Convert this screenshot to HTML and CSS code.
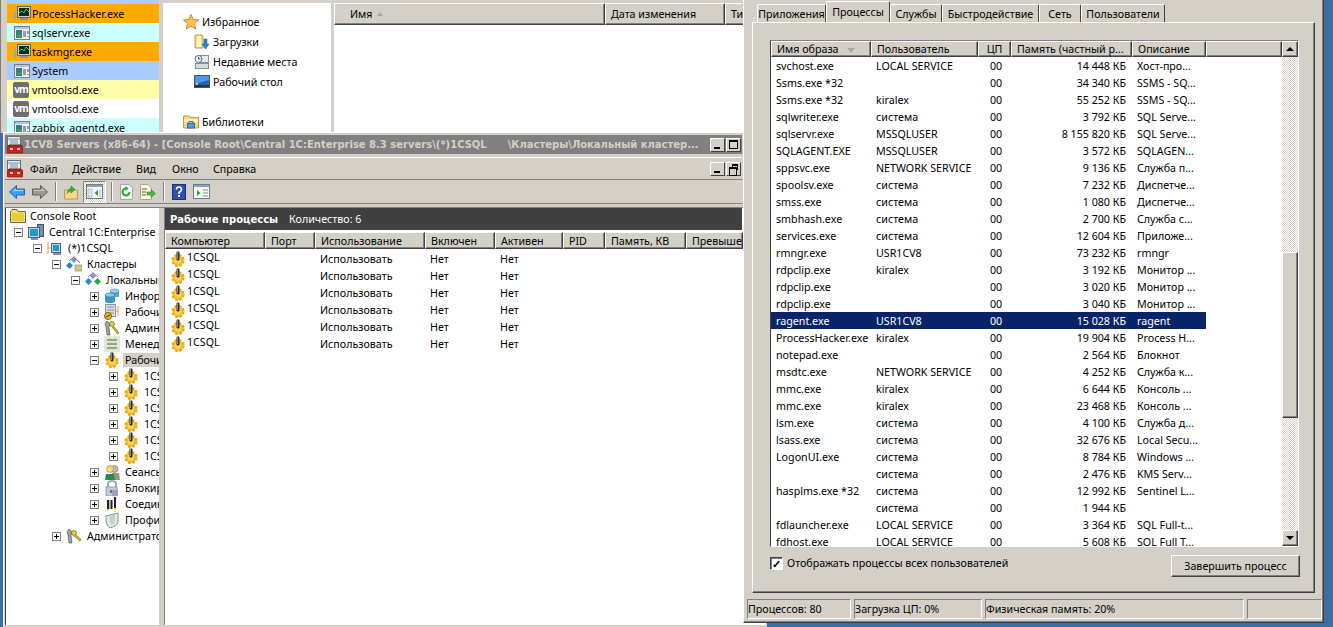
FILE: index.html
```html
<!DOCTYPE html>
<html>
<head>
    <meta charset="UTF-8">
    <title>1CV8 Servers</title>
    <link rel="stylesheet" href="styles.css">
</head>
<body>
<svg class="sprites" width="0" height="0">
    <symbol id="i-app" viewBox="0 0 16 16">
        <rect x="0.500" y="1.500" width="15" height="13" fill="#eef2f6" stroke="#75818c"/>
        <rect x="1" y="2" width="14" height="2" fill="#b9c6d2"/>
        <rect x="2" y="5" width="6" height="8" fill="#2f7f8c"/>
        <rect x="3" y="9" width="4" height="3" fill="#4f9a3c"/>
        <path d="M9 7h3M9 9h3M9 11h3M14 6v3M14 11v1" stroke="#3c4650"/>
    </symbol>
    <symbol id="i-hacker" viewBox="0 0 18 16">
        <rect x="4.500" y="0.500" width="13" height="11" fill="#c8d0d8" stroke="#5c6670"/>
        <rect x="6" y="2" width="10" height="8" fill="#10281c"/>
        <path d="M6 7l3-2 2 2 2-4 3 3" fill="none" stroke="#39d353"/>
        <rect x="7" y="12" width="8" height="2" fill="#8c969e"/>
        <path d="M1 5h2v9H1z" fill="#9aa6ae"/>
        <path d="M0 8h4" stroke="#e0a030"/>
    </symbol>
    <symbol id="i-star" viewBox="0 0 16 16">
        <path d="M8 0.500l2.200 5 5.300.5-4 3.600 1.200 5.400L8 12.200 3.300 15l1.200-5.400-4-3.600 5.300-.5z" fill="#fbc24c" stroke="#d8873c"/>
    </symbol>
    <symbol id="i-downloads" viewBox="0 0 16 16">
        <path d="M1 1h7l1 2v11H1z" fill="#f3dc8e" stroke="#b99a4c"/>
        <path d="M3 2h4v11H3z" fill="#fff3c0"/>
        <path d="M10 5h3v5h2l-3.500 5L8 10h2z" fill="#2b7fd0" stroke="#175a9c" stroke-width="0.500"/>
    </symbol>
    <symbol id="i-recent" viewBox="0 0 16 16">
        <rect x="1.500" y="9.500" width="13" height="5" fill="#d7dcdf" stroke="#87919a"/>
        <rect x="5.500" y="1.500" width="9" height="7" fill="#e8edf0" stroke="#87919a"/>
        <circle cx="4.500" cy="5" r="3.500" fill="#f4f6f8" stroke="#5d6a75"/>
        <path d="M4.500 3v2h2" fill="none" stroke="#39505f"/>
    </symbol>
    <symbol id="i-desktop" viewBox="0 0 16 16">
        <rect x="0.500" y="1.500" width="15" height="12" fill="#1f5fc0" stroke="#40525f"/>
        <path d="M1 2h14v4L1 10z" fill="#4f97e8"/>
        <rect x="1" y="11" width="14" height="2" fill="#2c3440"/>
        <rect x="2" y="9" width="2" height="2" fill="#e8c050"/>
    </symbol>
    <symbol id="i-library" viewBox="0 0 16 16">
        <path d="M0.500 3V2h6l1 1.500h8V14H.5z" fill="#f3d680" stroke="#c09a48"/>
        <path d="M1 5h14v3H1z" fill="#fff0b8"/>
        <rect x="4.500" y="9.500" width="7" height="4.500" fill="#4a9ade" stroke="#2c6ea8"/>
        <path d="M6 9.500v-2h4v2" fill="none" stroke="#2c6ea8"/>
    </symbol>
    <symbol id="i-mmc" viewBox="0 0 16 18">
        <rect x="0.500" y="0.500" width="13" height="9" fill="#e8ecf0" stroke="#667380"/>
        <path d="M1 3h12M3 5h8M3 7h8" stroke="#7890a8"/>
        <path d="M2 11V9h12v2" fill="none" stroke="#6a1010"/>
        <rect x="0" y="10" width="16" height="7" rx="1" fill="#c8231f" stroke="#7c1010" stroke-width="0.600"/>
        <rect x="3" y="12" width="3" height="2" fill="#f0d0a0"/>
        <rect x="10" y="12" width="3" height="2" fill="#f0d0a0"/>
    </symbol>
    <symbol id="i-back" viewBox="0 0 16 14">
        <path d="M0.500 7L7.500 0.500V4H15.500V10H7.500V13.500z" fill="#3aa0ee" stroke="#1e66b8"/>
        <path d="M3 7l4-3.500V5h7v1H6z" fill="#a8dcfa"/>
    </symbol>
    <symbol id="i-forward" viewBox="0 0 16 14">
        <path d="M15.500 7L8.500 0.500V4H0.500V10H8.500V13.500z" fill="#9a9a96" stroke="#5c5c58"/>
        <path d="M2 5h8V3l3 3H2z" fill="#c8c8c4"/>
    </symbol>
    <symbol id="i-up" viewBox="0 0 14 15">
        <path d="M0.500 5.500H13.500V14.500H0.500z" fill="#f6d98c" stroke="#b99a52"/>
        <path d="M3 9Q4 4 7 4V1.500L11 5 7 8.500V6Q5 6 3 9z" fill="#3fae3c" stroke="#1e7a22" stroke-width="0.600"/>
    </symbol>
    <symbol id="i-tree" viewBox="0 0 17 15">
        <rect x="0.500" y="0.500" width="16" height="14" fill="#f4f6f8" stroke="#6f7d8a"/>
        <rect x="1" y="1" width="15" height="2" fill="#8ea2b4"/>
        <rect x="2" y="5" width="4" height="8" fill="#dfe5ea" stroke="#8899a8" stroke-width="0.500"/>
        <path d="M12 6v6L8.500 9z" fill="#2e9e3a"/>
        <path d="M14 6v7" stroke="#aab6c0"/>
    </symbol>
    <symbol id="i-refresh" viewBox="0 0 13 16">
        <path d="M0.500 0.500H9L12.500 4V15.500H0.500z" fill="#f4f6f8" stroke="#a0a8ae"/>
        <path d="M9.500 8A3.500 3.500 0 1 1 6.500 4.500" fill="none" stroke="#2ea838" stroke-width="2"/>
        <path d="M5.500 2l3 2.500-3 2.500z" fill="#2ea838"/>
    </symbol>
    <symbol id="i-export" viewBox="0 0 16 16">
        <path d="M0.500 0.500H8L11.500 4V15.500H0.500z" fill="#fff8dc" stroke="#aaa68e"/>
        <path d="M2 5h5M2 8h4M2 11h4" stroke="#555"/>
        <path d="M7 8h4V5.500L15.500 9.500 11 13.500V11H7z" fill="#4cb840" stroke="#2c8a2c" stroke-width="0.600"/>
    </symbol>
    <symbol id="i-help" viewBox="0 0 14 16">
        <rect x="0.500" y="0.500" width="13" height="15" fill="#2e50b0" stroke="#1c2f78"/>
        <path d="M4.500 5.500Q4.500 3 7 3t2.500 2.500Q9.500 7 7 8.500V10" fill="none" stroke="#fff" stroke-width="1.600"/>
        <rect x="6" y="11" width="2" height="2" fill="#fff"/>
    </symbol>
    <symbol id="i-action" viewBox="0 0 17 15">
        <rect x="0.500" y="0.500" width="16" height="14" fill="#f4f6f8" stroke="#6f7d8a"/>
        <rect x="1" y="1" width="15" height="2" fill="#8ea2b4"/>
        <path d="M4 6v6l3.500-3z" fill="#2e9e3a"/>
        <path d="M10 6h5M10 9h5M10 12h5" stroke="#7890a8"/>
    </symbol>
    <symbol id="i-root" viewBox="0 0 16 14">
        <path d="M0.500 2.500L2 .5h5l1 2h7.500v11H.5z" fill="#f5e06a" stroke="#6a6a50"/>
        <path d="M2 4h12v8H2z" fill="#e8cc40"/>
    </symbol>
    <symbol id="i-computer" viewBox="0 0 16 16">
        <rect x="9.500" y="0.500" width="6" height="12" fill="#7a8ea8" stroke="#465468"/>
        <rect x="0.500" y="3.500" width="11" height="10" fill="#c8d4e0" stroke="#506070"/>
        <rect x="2" y="5" width="8" height="7" fill="#1c9ccc"/>
        <rect x="3" y="14" width="7" height="2" fill="#8494a8"/>
    </symbol>
    <symbol id="i-server" viewBox="0 0 16 16">
        <path d="M1 2v12M1 8h3" stroke="#e0a030"/>
        <rect x="4.500" y="3.500" width="9" height="9" fill="#c8d4e0" stroke="#506070"/>
        <rect x="6" y="5" width="6" height="6" fill="#1c9ccc"/>
        <rect x="6" y="13" width="8" height="2" fill="#8494a8"/>
    </symbol>
    <symbol id="i-clusters" viewBox="0 0 16 16">
        <path d="M8 0l3.500 3.500L8 7 4.500 3.500z" fill="#8494c0"/>
        <path d="M3.500 6L7 9.500 3.500 13 0 9.500z" fill="#2c84d0"/>
        <rect x="9" y="9" width="7" height="6" fill="#cfc890" stroke="#8a8450" stroke-width="0.600"/>
        <path d="M3 5l2-2M11 4l3 3" stroke="#5a8ad0"/>
    </symbol>
    <symbol id="i-cluster" viewBox="0 0 16 16">
        <path d="M8 0l3.500 3.500L8 7 4.500 3.500z" fill="#8494c0"/>
        <path d="M3.500 6L7 9.500 3.500 13 0 9.500z" fill="#2c84d0"/>
        <path d="M12.500 6L16 9.500 12.500 13 9 9.500z" fill="#2ca84c"/>
        <path d="M3 5l2-2M13 5l-2-2" stroke="#5a8ad0"/>
    </symbol>
    <symbol id="i-db" viewBox="0 0 16 16">
        <path d="M6 3v6h9V3z" fill="#5aa0d8"/>
        <ellipse cx="10.500" cy="3" rx="4.500" ry="2" fill="#9ed0ee" stroke="#3c7eb0" stroke-width="0.600"/>
        <path d="M1 7v6q0 2 5 2t5-2V7z" fill="#3c94c8"/>
        <ellipse cx="6" cy="7" rx="5" ry="2" fill="#8cc8e8" stroke="#2c7098" stroke-width="0.600"/>
    </symbol>
    <symbol id="i-worker" viewBox="0 0 16 16">
        <rect x="1.500" y="0.500" width="10" height="12" fill="#d8dce0" stroke="#8c949c"/>
        <path d="M3 3h7M3 6h7M3 9h7" stroke="#8c949c"/>
        <path d="M14 2v10M12 7h2" stroke="#e0a030"/>
        <circle cx="4" cy="12" r="3.500" fill="#f0b820" stroke="#7c5c10"/>
        <path d="M2 13l4-2" stroke="#402c00"/>
    </symbol>
    <symbol id="i-keys" viewBox="0 0 16 16">
        <path d="M3 1l3 3-1 3 1 8H3L2 7 1 4z" fill="#98a4a8" stroke="#404c50" stroke-width="0.600"/>
        <circle cx="8" cy="4" r="2.500" fill="#e0d040" stroke="#505010" stroke-width="0.600"/>
        <path d="M9.500 6l5.500 7-1.500 1L8 7" fill="#d8c830" stroke="#505010" stroke-width="0.600"/>
    </symbol>
    <symbol id="i-manager" viewBox="0 0 16 16">
        <rect x="0" y="0" width="16" height="16" fill="#dcebd8"/>
        <path d="M3 4h10M3 8h10M3 12h10" stroke="#555" stroke-width="1.200"/>
        <path d="M6 2v12M11 2v12" stroke="#e0b030" stroke-dasharray="2 2"/>
    </symbol>
    <symbol id="i-gear" viewBox="0 0 16 16">
        <circle cx="8" cy="9.500" r="5.200" fill="#f4bc22"/>
        <circle cx="8" cy="9.500" r="5.600" fill="none" stroke="#e8a818" stroke-width="2" stroke-dasharray="2.800 1.600"/>
        <circle cx="8" cy="9.500" r="3.200" fill="#fad860"/>
        <rect x="6.500" y="0.500" width="3" height="9" rx="1" fill="#2c2c2c"/>
        <rect x="7" y="1" width="1" height="7" fill="#8c8c8c"/>
    </symbol>
    <symbol id="i-user" viewBox="0 0 16 16">
        <circle cx="10.500" cy="5" r="3.500" fill="#c0b8a8" stroke="#70685c" stroke-width="0.600"/>
        <path d="M8 9h7l1 7H8z" fill="#9c9484"/>
        <circle cx="6" cy="5" r="3.500" fill="#f4d890" stroke="#a08030" stroke-width="0.600"/>
        <path d="M2.500 4Q6 -1 9.500 3z" fill="#e8c830"/>
        <path d="M1 16l1-6h8l1 6z" fill="#2c8a4c"/>
    </symbol>
    <symbol id="i-lock" viewBox="0 0 16 16">
        <path d="M4 8V4q0-3 4-3t4 3v4" fill="none" stroke="#a8b0b8" stroke-width="2"/>
        <rect x="2" y="7" width="11" height="9" fill="#c4ccd0" stroke="#98a0a8"/>
        <rect x="8" y="10" width="6" height="6" fill="#9ca0cc"/>
        <path d="M7 10v3" stroke="#555" stroke-width="1.500"/>
    </symbol>
    <symbol id="i-cables" viewBox="0 0 16 16">
        <path d="M4 4v9M7.500 4v9M11 1v11" stroke="#222" stroke-width="2"/>
        <path d="M5.500 4v9" stroke="#bbb"/>
        <path d="M4 13v3M11 12v4" stroke="#e8e020" stroke-width="2" stroke-dasharray="2 1"/>
    </symbol>
    <symbol id="i-shield" viewBox="0 0 16 16">
        <path d="M2 4L14 1v8q0 5-8 7Q2 13 2 9z" fill="#e4e8e4" stroke="#8c948c"/>
        <path d="M5 5l6-2v6q0 3-4 4z" fill="#c4d4c4"/>
    </symbol>
    <symbol id="i-admin" viewBox="0 0 16 16">
        <path d="M3 1l3 3-1 3 1 8H3L2 7 1 4z" fill="#98a4a8" stroke="#404c50" stroke-width="0.600"/>
        <circle cx="8" cy="5" r="2.500" fill="#e8d030" stroke="#505010" stroke-width="0.600"/>
        <path d="M9.500 6.500l5.500 5-1 1.500L8 8" fill="#d8c020" stroke="#505010" stroke-width="0.600"/>
    </symbol>
</svg>

<div class="desktop">

    <!-- список процессов слева сверху -->
    <div class="window hacker-win">
        <div class="ph-list">
            <div class="ph-row ph-orange"><svg class="ph-icon"><use href="#i-hacker"/></svg>ProcessHacker.exe</div>
            <div class="ph-row ph-cyan"><svg class="ph-icon"><use href="#i-app"/></svg>sqlservr.exe</div>
            <div class="ph-row ph-orange"><svg class="ph-icon"><use href="#i-hacker"/></svg>taskmgr.exe</div>
            <div class="ph-row ph-blue"><svg class="ph-icon"><use href="#i-app"/></svg>System</div>
            <div class="ph-row ph-yellow"><span class="vm-icon">vm</span>vmtoolsd.exe</div>
            <div class="ph-row ph-white"><span class="vm-icon">vm</span>vmtoolsd.exe</div>
            <div class="ph-row ph-cyan"><svg class="ph-icon"><use href="#i-app"/></svg>zabbix_agentd.exe</div>
        </div>
    </div>

    <!-- проводник -->
    <div class="window explorer-win">
        <div class="nav-pane">
            <div class="nav-item nav-top nav-first"><svg class="nav-icon"><use href="#i-star"/></svg>Избранное</div>
            <div class="nav-item nav-sub"><svg class="nav-icon"><use href="#i-downloads"/></svg>Загрузки</div>
            <div class="nav-item nav-sub"><svg class="nav-icon"><use href="#i-recent"/></svg>Недавние места</div>
            <div class="nav-item nav-sub"><svg class="nav-icon"><use href="#i-desktop"/></svg>Рабочий стол</div>
            <div class="nav-item nav-top nav-lib"><svg class="nav-icon"><use href="#i-library"/></svg>Библиотеки</div>
        </div>
        <div class="file-pane">
            <div class="file-header">
                <div class="file-col col-name">Имя <span class="sort-up"></span></div>
                <div class="file-col col-date">Дата изменения</div>
                <div class="file-col col-type">Тип</div>
            </div>
        </div>
    </div>

    <!-- консоль 1С -->
    <div class="window mmc-win">
        <div class="mmc-title">
            <svg class="mmc-title-icon"><use href="#i-mmc"/></svg>
            <span class="mmc-title-text">1CV8 Servers (x86-64) - [Console Root\Central 1C:Enterprise 8.3 servers\(*)1CSQL &nbsp; &nbsp; &nbsp;\Кластеры\Локальный кластер...</span>
            <div class="caption-btns">
                <span class="caption-btn"><i class="glyph-min"></i></span>
                <span class="caption-btn"><i class="glyph-max"></i></span>
            </div>
        </div>
        <div class="mmc-menu">
            <svg class="mmc-menu-icon"><use href="#i-mmc"/></svg>
            <span class="menu-item m-file">Файл</span>
            <span class="menu-item m-action">Действие</span>
            <span class="menu-item m-view">Вид</span>
            <span class="menu-item m-window">Окно</span>
            <span class="menu-item">Справка</span>
            <div class="caption-btns mdi-btns">
                <span class="caption-btn"><i class="glyph-min"></i></span>
                <span class="caption-btn"><i class="glyph-restore"></i></span>
            </div>
        </div>
        <div class="mmc-toolbar">
            <svg class="tb-icon tb-back"><use href="#i-back"/></svg>
            <svg class="tb-icon tb-forward"><use href="#i-forward"/></svg>
            <span class="tb-sep"></span>
            <svg class="tb-icon tb-up"><use href="#i-up"/></svg>
            <span class="tb-pressed"><svg class="tb-icon"><use href="#i-tree"/></svg></span>
            <span class="tb-sep"></span>
            <svg class="tb-icon tb-refresh"><use href="#i-refresh"/></svg>
            <svg class="tb-icon tb-export"><use href="#i-export"/></svg>
            <span class="tb-sep"></span>
            <svg class="tb-icon tb-help"><use href="#i-help"/></svg>
            <svg class="tb-icon tb-action"><use href="#i-action"/></svg>
        </div>
        <div class="mmc-body">
            <div class="tree-pane">
                <div class="tree-row"><svg class="tree-icon root-icon"><use href="#i-root"/></svg><span class="tree-label">Console Root</span></div>
                <div class="tree-row lvl1"><span class="exp exp-open"></span><svg class="tree-icon"><use href="#i-computer"/></svg><span class="tree-label">Central 1C:Enterprise 8.3 servers</span></div>
                <div class="tree-row lvl2"><span class="exp exp-open"></span><svg class="tree-icon"><use href="#i-server"/></svg><span class="tree-label">(*)1CSQL</span></div>
                <div class="tree-row lvl3"><span class="exp exp-open"></span><svg class="tree-icon"><use href="#i-clusters"/></svg><span class="tree-label">Кластеры</span></div>
                <div class="tree-row lvl4"><span class="exp exp-open"></span><svg class="tree-icon"><use href="#i-cluster"/></svg><span class="tree-label">Локальный кластер</span></div>
                <div class="tree-row lvl5"><span class="exp"></span><svg class="tree-icon"><use href="#i-db"/></svg><span class="tree-label">Информационные базы</span></div>
                <div class="tree-row lvl5"><span class="exp"></span><svg class="tree-icon"><use href="#i-worker"/></svg><span class="tree-label">Рабочие серверы</span></div>
                <div class="tree-row lvl5"><span class="exp"></span><svg class="tree-icon"><use href="#i-keys"/></svg><span class="tree-label">Администраторы</span></div>
                <div class="tree-row lvl5"><span class="exp"></span><svg class="tree-icon"><use href="#i-manager"/></svg><span class="tree-label">Менеджеры кластера</span></div>
                <div class="tree-row lvl5"><span class="exp exp-open"></span><svg class="tree-icon"><use href="#i-gear"/></svg><span class="tree-label tree-selected">Рабочие процессы</span></div>
                <div class="tree-row lvl6"><span class="exp"></span><svg class="tree-icon"><use href="#i-gear"/></svg><span class="tree-label">1CSQL</span></div>
                <div class="tree-row lvl6"><span class="exp"></span><svg class="tree-icon"><use href="#i-gear"/></svg><span class="tree-label">1CSQL</span></div>
                <div class="tree-row lvl6"><span class="exp"></span><svg class="tree-icon"><use href="#i-gear"/></svg><span class="tree-label">1CSQL</span></div>
                <div class="tree-row lvl6"><span class="exp"></span><svg class="tree-icon"><use href="#i-gear"/></svg><span class="tree-label">1CSQL</span></div>
                <div class="tree-row lvl6"><span class="exp"></span><svg class="tree-icon"><use href="#i-gear"/></svg><span class="tree-label">1CSQL</span></div>
                <div class="tree-row lvl6"><span class="exp"></span><svg class="tree-icon"><use href="#i-gear"/></svg><span class="tree-label">1CSQL</span></div>
                <div class="tree-row lvl5"><span class="exp"></span><svg class="tree-icon"><use href="#i-user"/></svg><span class="tree-label">Сеансы</span></div>
                <div class="tree-row lvl5"><span class="exp"></span><svg class="tree-icon"><use href="#i-lock"/></svg><span class="tree-label">Блокировки</span></div>
                <div class="tree-row lvl5"><span class="exp"></span><svg class="tree-icon"><use href="#i-cables"/></svg><span class="tree-label">Соединения</span></div>
                <div class="tree-row lvl5"><span class="exp"></span><svg class="tree-icon"><use href="#i-shield"/></svg><span class="tree-label">Профили безопасности</span></div>
                <div class="tree-row lvl3"><span class="exp"></span><svg class="tree-icon"><use href="#i-admin"/></svg><span class="tree-label">Администраторы</span></div>
            </div>
            <div class="result-pane">
                <div class="result-banner"><b>Рабочие процессы</b><span class="result-count">Количество: 6</span></div>
                <table class="result-table">
                    <colgroup>
                        <col class="rc-1"><col class="rc-2"><col class="rc-3"><col class="rc-4"><col class="rc-5"><col class="rc-6"><col class="rc-7"><col class="rc-8">
                    </colgroup>
                    <thead>
                        <tr><th>Компьютер</th><th>Порт</th><th>Использование</th><th>Включен</th><th>Активен</th><th>PID</th><th>Память, КВ</th><th>Превышение</th></tr>
                    </thead>
                    <tbody>
                        <tr><td class="host"><svg class="row-icon"><use href="#i-gear"/></svg>1CSQL</td><td></td><td>Использовать</td><td>Нет</td><td>Нет</td><td></td><td></td><td></td></tr>
                        <tr><td class="host"><svg class="row-icon"><use href="#i-gear"/></svg>1CSQL</td><td></td><td>Использовать</td><td>Нет</td><td>Нет</td><td></td><td></td><td></td></tr>
                        <tr><td class="host"><svg class="row-icon"><use href="#i-gear"/></svg>1CSQL</td><td></td><td>Использовать</td><td>Нет</td><td>Нет</td><td></td><td></td><td></td></tr>
                        <tr><td class="host"><svg class="row-icon"><use href="#i-gear"/></svg>1CSQL</td><td></td><td>Использовать</td><td>Нет</td><td>Нет</td><td></td><td></td><td></td></tr>
                        <tr><td class="host"><svg class="row-icon"><use href="#i-gear"/></svg>1CSQL</td><td></td><td>Использовать</td><td>Нет</td><td>Нет</td><td></td><td></td><td></td></tr>
                        <tr><td class="host"><svg class="row-icon"><use href="#i-gear"/></svg>1CSQL</td><td></td><td>Использовать</td><td>Нет</td><td>Нет</td><td></td><td></td><td></td></tr>
                    </tbody>
                </table>
            </div>
        </div>
    </div>

    <!-- диспетчер задач -->
    <div class="window taskmgr-win">
        <div class="tm-tabs">
            <span class="tm-tab t-apps">Приложения</span>
            <span class="tm-tab t-proc tm-tab-active">Процессы</span>
            <span class="tm-tab t-serv">Службы</span>
            <span class="tm-tab t-perf">Быстродействие</span>
            <span class="tm-tab t-net">Сеть</span>
            <span class="tm-tab t-users">Пользователи</span>
        </div>
        <div class="tm-panel">
            <div class="tm-list">
                <div class="tm-grid">
                    <table class="tm-table">
                        <colgroup>
                            <col class="tc-1"><col class="tc-2"><col class="tc-3"><col class="tc-4"><col class="tc-5"><col class="tc-6">
                        </colgroup>
                        <thead>
                            <tr><th>Имя образа <span class="sort-down"></span></th><th>Пользователь</th><th class="th-cpu">ЦП</th><th>Память (частный р...</th><th>Описание</th><th></th></tr>
                        </thead>
                        <tbody>
                            <tr><td>svchost.exe</td><td>LOCAL SERVICE</td><td class="cpu">00</td><td class="mem">14 448 КБ</td><td>Хост-про...</td><td></td></tr>
                            <tr><td>Ssms.exe *32</td><td></td><td class="cpu">00</td><td class="mem">34 340 КБ</td><td>SSMS - SQ...</td><td></td></tr>
                            <tr><td>Ssms.exe *32</td><td>kiralex</td><td class="cpu">00</td><td class="mem">55 252 КБ</td><td>SSMS - SQ...</td><td></td></tr>
                            <tr><td>sqlwriter.exe</td><td>система</td><td class="cpu">00</td><td class="mem">3 792 КБ</td><td>SQL Serve...</td><td></td></tr>
                            <tr><td>sqlservr.exe</td><td>MSSQLUSER</td><td class="cpu">00</td><td class="mem">8 155 820 КБ</td><td>SQL Serve...</td><td></td></tr>
                            <tr><td>SQLAGENT.EXE</td><td>MSSQLUSER</td><td class="cpu">00</td><td class="mem">3 572 КБ</td><td>SQLAGEN...</td><td></td></tr>
                            <tr><td>sppsvc.exe</td><td>NETWORK SERVICE</td><td class="cpu">00</td><td class="mem">9 136 КБ</td><td>Служба п...</td><td></td></tr>
                            <tr><td>spoolsv.exe</td><td>система</td><td class="cpu">00</td><td class="mem">7 232 КБ</td><td>Диспетче...</td><td></td></tr>
                            <tr><td>smss.exe</td><td>система</td><td class="cpu">00</td><td class="mem">1 080 КБ</td><td>Диспетче...</td><td></td></tr>
                            <tr><td>smbhash.exe</td><td>система</td><td class="cpu">00</td><td class="mem">2 700 КБ</td><td>Служба с...</td><td></td></tr>
                            <tr><td>services.exe</td><td>система</td><td class="cpu">00</td><td class="mem">12 604 КБ</td><td>Приложе...</td><td></td></tr>
                            <tr><td>rmngr.exe</td><td>USR1CV8</td><td class="cpu">00</td><td class="mem">73 232 КБ</td><td>rmngr</td><td></td></tr>
                            <tr><td>rdpclip.exe</td><td>kiralex</td><td class="cpu">00</td><td class="mem">3 192 КБ</td><td>Монитор ...</td><td></td></tr>
                            <tr><td>rdpclip.exe</td><td></td><td class="cpu">00</td><td class="mem">3 020 КБ</td><td>Монитор ...</td><td></td></tr>
                            <tr><td>rdpclip.exe</td><td></td><td class="cpu">00</td><td class="mem">3 040 КБ</td><td>Монитор ...</td><td></td></tr>
                            <tr class="tm-selected"><td>ragent.exe</td><td>USR1CV8</td><td class="cpu">00</td><td class="mem">15 028 КБ</td><td>ragent</td><td class="tm-unselected"></td></tr>
                            <tr><td>ProcessHacker.exe</td><td>kiralex</td><td class="cpu">00</td><td class="mem">19 904 КБ</td><td>Process H...</td><td></td></tr>
                            <tr><td>notepad.exe</td><td></td><td class="cpu">00</td><td class="mem">2 564 КБ</td><td>Блокнот</td><td></td></tr>
                            <tr><td>msdtc.exe</td><td>NETWORK SERVICE</td><td class="cpu">00</td><td class="mem">4 252 КБ</td><td>Служба к...</td><td></td></tr>
                            <tr><td>mmc.exe</td><td>kiralex</td><td class="cpu">00</td><td class="mem">6 644 КБ</td><td>Консоль ...</td><td></td></tr>
                            <tr><td>mmc.exe</td><td>kiralex</td><td class="cpu">00</td><td class="mem">23 468 КБ</td><td>Консоль ...</td><td></td></tr>
                            <tr><td>lsm.exe</td><td>система</td><td class="cpu">00</td><td class="mem">4 100 КБ</td><td>Служба д...</td><td></td></tr>
                            <tr><td>lsass.exe</td><td>система</td><td class="cpu">00</td><td class="mem">32 676 КБ</td><td>Local Secu...</td><td></td></tr>
                            <tr><td>LogonUI.exe</td><td>система</td><td class="cpu">00</td><td class="mem">8 784 КБ</td><td>Windows ...</td><td></td></tr>
                            <tr><td></td><td>система</td><td class="cpu">00</td><td class="mem">2 476 КБ</td><td>KMS Serv...</td><td></td></tr>
                            <tr><td>hasplms.exe *32</td><td>система</td><td class="cpu">00</td><td class="mem">12 992 КБ</td><td>Sentinel L...</td><td></td></tr>
                            <tr><td></td><td>система</td><td class="cpu">00</td><td class="mem">1 944 КБ</td><td></td><td></td></tr>
                            <tr><td>fdlauncher.exe</td><td>LOCAL SERVICE</td><td class="cpu">00</td><td class="mem">3 364 КБ</td><td>SQL Full-t...</td><td></td></tr>
                            <tr><td>fdhost.exe</td><td>LOCAL SERVICE</td><td class="cpu">00</td><td class="mem">5 608 КБ</td><td>SQL Full T...</td><td></td></tr>
                        </tbody>
                    </table>
                </div>
                <div class="scrollbar">
                    <span class="sb-btn"><i class="arrow-up"></i></span>
                    <span class="sb-track sb-track-top"></span>
                    <span class="sb-thumb"></span>
                    <span class="sb-track sb-track-bottom"></span>
                    <span class="sb-btn"><i class="arrow-down"></i></span>
                </div>
            </div>
            <div class="tm-actions">
                <label class="tm-check"><span class="checkbox">&#10003;</span>Отображать процессы всех пользователей</label>
                <button class="tm-end">Завершить процесс</button>
            </div>
        </div>
        <div class="tm-status">
            <span class="st-cell st-1">Процессов: 80</span>
            <span class="st-cell st-2">Загрузка ЦП: 0%</span>
            <span class="st-cell st-3">Физическая память: 20%</span>
            <span class="st-cell st-4"></span>
        </div>
    </div>

</div>
</body>
</html>
```

FILE: styles.css
```css
* {
    box-sizing: border-box;
}

body {
    margin: 0;
    font-family: "Noto Sans", "Liberation Sans", sans-serif;
    font-size: 10.7px;
    color: #000;
}

.sprites {
    position: absolute;
}

.desktop {
    position: relative;
    width: 1333px;
    height: 627px;
    overflow: hidden;
    background-color: #3a6ea5;
}

.window {
    position: absolute;
    background-color: #d4d0c8;
    overflow: hidden;
}

/* список процессов */
.hacker-win {
    left: 0;
    top: 0;
    width: 163px;
    height: 133px;
    padding: 0 4px 0 7px;
    border-left: 1px solid #808080;
}

.ph-list {
    height: 100%;
    padding-top: 4px;
    background-color: #aaccff;
    margin-left: -1px;
}

.ph-row {
    display: flex;
    align-items: center;
    height: 19px;
    padding-left: 6px;
    white-space: nowrap;
}

.ph-icon {
    width: 18px;
    height: 16px;
    margin-right: 1px;
}

.ph-orange { background-color: #ffaa00; }
.ph-cyan { background-color: #ccffff; }
.ph-blue { background-color: #aaccff; }
.ph-yellow { background-color: #ffffaa; }
.ph-white { background-color: #fff; }

.vm-icon {
    width: 16px;
    height: 16px;
    margin-right: 3px;
    border-radius: 2px;
    background-color: #6e6e6e;
    color: #fff;
    font-size: 10px;
    font-weight: bold;
    line-height: 15px;
    text-align: center;
    letter-spacing: -1px;
}

/* проводник */
.explorer-win {
    left: 160px;
    top: 0;
    width: 590px;
    height: 133px;
    display: flex;
    gap: 3px;
    padding: 3px 0 0 3px;
}

.nav-pane {
    flex: none;
    width: 168px;
    background-color: #fff;
}

.nav-item {
    display: flex;
    align-items: center;
    height: 20px;
    white-space: nowrap;
}

.nav-top { padding-left: 20px; }
.nav-sub { padding-left: 31px; }
.nav-first { margin-top: 9px; }
.nav-lib { margin-top: 20px; }

.nav-icon {
    width: 16px;
    height: 16px;
    margin-right: 3px;
}

.file-pane {
    flex: 1;
    min-width: 0;
    background-color: #fff;
}

.file-header {
    display: flex;
    height: 22px;
    background-color: #d4d0c8;
}

.file-col {
    display: flex;
    align-items: center;
    flex: none;
    padding-left: 5px;
    border: 1px solid;
    border-color: #fff #404040 #404040 #fff;
    box-shadow: inset -1px -1px #808080;
    white-space: nowrap;
    overflow: hidden;
}

.col-name {
    width: 271px;
    padding-left: 15px;
}

.col-date { width: 120px; }
.col-type { width: 60px; }

.sort-up {
    width: 0;
    height: 0;
    margin-left: 5px;
    border-left: 3px solid transparent;
    border-right: 3px solid transparent;
    border-bottom: 4px solid #a8a8a8;
}

.sort-down {
    display: inline-block;
    width: 0;
    height: 0;
    margin-left: 6px;
    vertical-align: middle;
    border-left: 4px solid transparent;
    border-right: 4px solid transparent;
    border-top: 5px solid #a8a8a8;
}

/* консоль */
.mmc-win {
    left: 3px;
    top: 132px;
    width: 764px;
    height: 495px;
    display: flex;
    flex-direction: column;
    padding: 2px 1px 0 1px;
    border-top: 1px solid #fff;
    border-left: 1px solid #fff;
}

.mmc-title {
    display: flex;
    align-items: center;
    flex: none;
    width: 737px;
    height: 19px;
    padding-left: 2px;
    background-color: #808080;
    color: #d4d0c8;
    white-space: nowrap;
}

.mmc-title-icon {
    width: 16px;
    height: 18px;
    margin-right: 1px;
}

.mmc-title-text {
    font-family: "DejaVu Sans", sans-serif;
    font-weight: bold;
    font-size: 10px;
    flex: 1;
    overflow: hidden;
}

.caption-btns {
    display: flex;
    margin-right: 1px;
    gap: 1px;
}

.caption-btn {
    position: relative;
    width: 15px;
    height: 14px;
    background-color: #d4d0c8;
    border: 1px solid;
    border-color: #fff #404040 #404040 #fff;
}

.glyph-min {
    position: absolute;
    left: 3px;
    bottom: 2px;
    width: 6px;
    height: 2px;
    background-color: #000;
}

.glyph-max {
    position: absolute;
    left: 2px;
    top: 1px;
    width: 9px;
    height: 9px;
    border: 1px solid #000;
    border-top-width: 2px;
}

.glyph-restore {
    position: absolute;
    left: 5px;
    top: 1px;
    width: 6px;
    height: 6px;
    border: 1px solid #000;
    border-top-width: 2px;
}

.glyph-restore::after {
    content: "";
    position: absolute;
    left: -4px;
    top: 1px;
    width: 6px;
    height: 6px;
    background-color: #d4d0c8;
    border: 1px solid #000;
    border-top-width: 2px;
}

.mmc-menu {
    display: flex;
    align-items: center;
    flex: none;
    width: 737px;
    height: 23px;
    margin-top: 3px;
    padding-left: 2px;
    border-top: 1px solid #fff;
    border-bottom: 1px solid #808080;
}

.mmc-menu-icon {
    width: 16px;
    height: 18px;
    margin-right: 7px;
}

.menu-item { white-space: nowrap; }
.m-file { width: 42px; }
.m-action { width: 64px; }
.m-view { width: 36px; }
.m-window { width: 41px; }

.mdi-btns {
    margin-left: auto;
}

.mmc-toolbar {
    display: flex;
    align-items: center;
    flex: none;
    width: 737px;
    height: 24px;
    padding-left: 4px;
    border-bottom: 1px solid #808080;
}

.tb-icon {
    width: 16px;
    height: 16px;
}

.tb-back { height: 14px; }
.tb-forward { height: 14px; margin-left: 7px; }
.tb-up { margin-left: 0; width: 14px; }
.tb-refresh { width: 13px; margin-left: 0; }
.tb-export { margin-left: 7px; }
.tb-help { width: 14px; }
.tb-action { width: 17px; margin-left: 7px; height: 15px; }

.tb-sep {
    width: 2px;
    height: 19px;
    margin: 0 7px;
    border-left: 1px solid #808080;
    border-right: 1px solid #fff;
}

.tb-pressed {
    display: flex;
    align-items: center;
    justify-content: center;
    width: 23px;
    height: 22px;
    margin-left: 5px;
    margin-right: -2px;
    border: 1px solid;
    border-color: #808080 #fff #fff #808080;
    background: repeating-conic-gradient(#d4d0c8 0 25%, #fff 0 50%) 0 0 / 2px 2px;
}

.tb-pressed .tb-icon {
    width: 17px;
    height: 15px;
}

.mmc-body {
    display: flex;
    flex: 1;
    gap: 5px;
    min-height: 0;
    margin-top: 3px;
    margin-bottom: 2px;
    border-top: 1px solid #808080;
}

.tree-pane {
    flex: none;
    width: 154px;
    background-color: #fff;
    border-left: 1px solid #404040;
    overflow: hidden;
}

.tree-row {
    display: flex;
    align-items: center;
    height: 16px;
    white-space: nowrap;
}

.tree-row:first-child { padding-left: 4px; }
.lvl1 { padding-left: 8px; }
.lvl2 { padding-left: 27px; }
.lvl3 { padding-left: 46px; }
.lvl4 { padding-left: 65px; }
.lvl5 { padding-left: 84px; }
.lvl6 { padding-left: 103px; }

.exp {
    position: relative;
    flex: none;
    width: 9px;
    height: 9px;
    margin-right: 5px;
    background-color: #fff;
    border: 1px solid #808080;
}

.exp::before {
    content: "";
    position: absolute;
    left: 1px;
    top: 3px;
    width: 5px;
    height: 1px;
    background-color: #000;
}

.exp::after {
    content: "";
    position: absolute;
    left: 3px;
    top: 1px;
    width: 1px;
    height: 5px;
    background-color: #000;
}

.exp-open::after { display: none; }

.tree-icon {
    flex: none;
    width: 16px;
    height: 16px;
    margin-right: 3px;
}

.root-icon { height: 14px; margin-right: 2px; }

.tree-label { padding: 0 2px; }

.tree-selected { background-color: #d4d0c8; }

.result-pane {
    flex: 1;
    min-width: 0;
    background-color: #fff;
    overflow: hidden;
    border-left: 1px solid #808080;
}

.result-banner {
    display: flex;
    align-items: center;
    width: 577px;
    height: 22px;
    padding-left: 5px;
    background-color: #404040;
    color: #fff;
    white-space: nowrap;
}

.result-banner b {
    font-family: "DejaVu Sans", sans-serif;
    font-size: 10px;
}

.result-count { margin-left: 11px; }

.result-table,
.tm-table {
    table-layout: fixed;
    border-collapse: separate;
    border-spacing: 0;
}

.result-table {
    width: 578px;
    margin-top: 2px;
}

.rc-1 { width: 100px; }
.rc-2 { width: 50px; }
.rc-3 { width: 110px; }
.rc-4 { width: 70px; }
.rc-5 { width: 68px; }
.rc-6 { width: 42px; }
.rc-7 { width: 81px; }
.rc-8 { width: 57px; }

.result-table th,
.tm-table th {
    height: 17px;
    padding: 0 0 0 5px;
    font-weight: normal;
    text-align: left;
    white-space: nowrap;
    overflow: hidden;
    background-color: #d4d0c8;
    border: 1px solid;
    border-color: #fff #404040 #404040 #fff;
    box-shadow: inset -1px -1px #808080;
}

.result-table td,
.tm-table td {
    height: 17px;
    padding: 0 0 0 5px;
    white-space: nowrap;
    overflow: hidden;
}

.result-table tbody tr:first-child td {
    height: 18px;
    padding-top: 1px;
}

.row-icon {
    width: 16px;
    height: 16px;
    margin-right: 1px;
    vertical-align: middle;
}

/* диспетчер задач */
.taskmgr-win {
    left: 743px;
    top: 0;
    width: 581px;
    height: 623px;
    padding: 2px 8px 0 8px;
    border-left: 1px solid #fff;
    border-right: 1px solid #404040;
    border-bottom: 1px solid #404040;
    box-shadow: inset -1px -1px #808080;
}

.tm-tabs {
    display: flex;
    height: 20px;
    padding-left: 5px;
}

.tm-tab {
    display: flex;
    align-items: center;
    justify-content: center;
    height: 18px;
    margin-top: 2px;
    border: 1px solid;
    border-bottom: none;
    border-color: #fff #404040 #fff #fff;
    border-radius: 2px 2px 0 0;
    white-space: nowrap;
}

.tm-tab-active {
    position: relative;
    z-index: 1;
    height: 21px;
    margin-top: -1px;
    background-color: #d4d0c8;
}

.t-apps { width: 69px; }
.t-proc { width: 64px; }
.t-serv { width: 52px; }
.t-perf { width: 97px; }
.t-net { width: 42px; }
.t-users { width: 84px; }

.tm-panel {
    height: 571px;
    padding: 17px 15px 0 17px;
    border: 1px solid;
    border-color: #fff #404040 #404040 #fff;
    box-shadow: inset -1px -1px #808080;
}

.tm-list {
    display: flex;
    height: 507px;
    background-color: #fff;
    border: 1px solid;
    border-color: #808080 #fff #fff #404040;
    overflow: hidden;
}

.tm-grid {
    flex: none;
    width: 511px;
    overflow: hidden;
}

.tm-table {
    width: 511px;
}

.tc-1 { width: 100px; }
.tc-2 { width: 107px; }
.tc-3 { width: 33px; }
.tc-4 { width: 121px; }
.tc-5 { width: 74px; }
.tc-6 { width: 76px; }

.tm-table th {
    height: 16px;
}

.tm-table .th-cpu { text-align: center; padding: 0; }
.tm-table td.cpu { padding-left: 12px; }
.tm-table td.mem { padding: 0 6px 0 0; text-align: right; }

.tm-selected td {
    background-color: #0a246a;
    color: #fff;
}

.tm-selected td.tm-unselected {
    background-color: #fff;
}

.scrollbar {
    display: flex;
    flex-direction: column;
    flex: none;
    width: 16px;
}

.sb-btn {
    position: relative;
    flex: none;
    height: 16px;
    background-color: #d4d0c8;
    border: 1px solid;
    border-color: #fff #404040 #404040 #fff;
    box-shadow: inset -1px -1px #808080;
}

.arrow-up,
.arrow-down {
    position: absolute;
    left: 3px;
    top: 5px;
    width: 0;
    height: 0;
    border-left: 4px solid transparent;
    border-right: 4px solid transparent;
}

.arrow-up { border-bottom: 4px solid #000; }
.arrow-down { border-top: 4px solid #000; }

.sb-track {
    background: repeating-conic-gradient(#d4d0c8 0 25%, #fff 0 50%) 0 0 / 2px 2px;
}

.sb-track-top { flex: none; height: 195px; }
.sb-track-bottom { flex: 1; }

.sb-thumb {
    flex: none;
    height: 166px;
    background-color: #d4d0c8;
    border: 1px solid;
    border-color: #fff #404040 #404040 #fff;
    box-shadow: inset -1px -1px #808080;
}

.tm-actions {
    display: flex;
    justify-content: space-between;
    padding-top: 8px;
}

.tm-check {
    display: flex;
    align-items: center;
    height: 16px;
    white-space: nowrap;
}

.checkbox {
    width: 13px;
    height: 13px;
    margin-right: 4px;
    background-color: #fff;
    border: 1px solid;
    border-color: #404040 #fff #fff #404040;
    box-shadow: inset 1px 1px #808080;
    font-size: 11px;
    font-weight: bold;
    line-height: 11px;
    text-align: center;
}

.tm-end {
    width: 129px;
    height: 22px;
    margin-right: -1px;
    padding: 0;
    font: inherit;
    background-color: #d4d0c8;
    border: 1px solid;
    border-color: #fff #404040 #404040 #fff;
    box-shadow: inset -1px -1px #808080;
}

.tm-status {
    display: flex;
    gap: 3px;
    height: 20px;
    margin: 6px -7px 0 -5px;
}

.st-cell {
    display: flex;
    align-items: center;
    border: 1px solid;
    border-color: #808080 #fff #fff #808080;
    white-space: nowrap;
}

.st-1 { width: 104px; }
.st-2 { width: 128px; }
.st-3 { width: 259px; }
.st-4 { flex: 1; }
```
